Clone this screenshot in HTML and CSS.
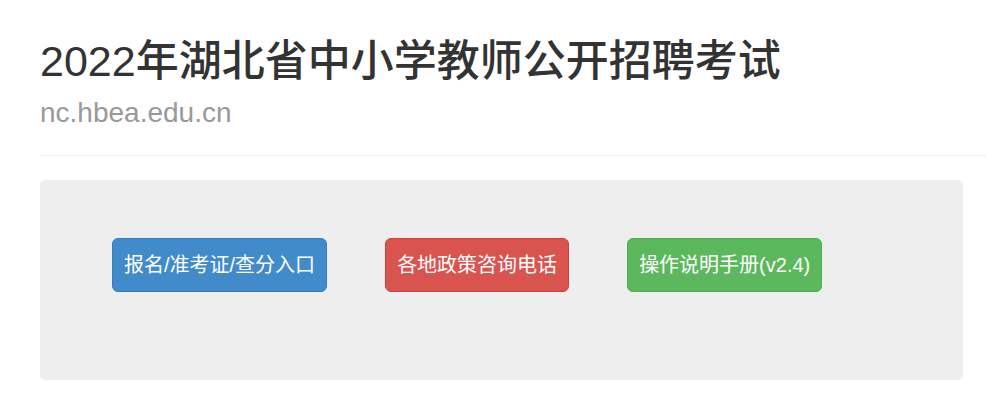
FILE: index.html
```html
<!DOCTYPE html>
<html lang="zh-CN">
    <head>
        <meta charset="utf-8">
        <title>2022年湖北省中小学教师公开招聘考试</title>
        <link rel="stylesheet" href="styles.css">
    </head>
    <body>
        <div class="container">
            <div class="page-header">
                <h1>2022年湖北省中小学教师公开招聘考试</h1>
                <p class="site">nc.hbea.edu.cn</p>
            </div>
            <div class="jumbotron">
                <a class="btn btn-primary" href="#">报名/准考证/查分入口</a>
                <a class="btn btn-danger" href="#">各地政策咨询电话</a>
                <a class="btn btn-success" href="#">操作说明手册(v2.4)</a>
            </div>
        </div>
    </body>
</html>
```

FILE: styles.css
```css
body {
    margin: 0;
    font-family: "Liberation Sans", Arial, "Noto Sans CJK SC", sans-serif;
    color: #333;
    background-color: #fff;
}

.container {
    padding-left: 40px;
}

.page-header {
    margin-top: 38px;
    padding-bottom: 26px;
    border-bottom: 1px solid #eee;
}

h1 {
    margin: 0;
    font-size: 43px;
    line-height: 47px;
    font-weight: 500;
    color: #333;
}

.site {
    margin: 12px 0 0;
    font-size: 28px;
    line-height: 32px;
    color: #999;
}

.jumbotron {
    display: flex;
    gap: 58px;
    align-items: flex-start;
    margin: 24px 23px 0 0;
    padding: 58px 72px 88px;
    background-color: #eee;
    border-radius: 6px;
}

.btn {
    display: inline-block;
    padding: 13px 11px;
    font-size: 20px;
    line-height: 26px;
    color: #fff;
    text-decoration: none;
    border: 1px solid transparent;
    border-radius: 6px;
    white-space: nowrap;
}

.btn-primary {
    background-color: #428bca;
    border-color: #357ebd;
}

.btn-danger {
    background-color: #d9534f;
    border-color: #d43f3a;
}

.btn-success {
    background-color: #5cb85c;
    border-color: #4cae4c;
}
```
